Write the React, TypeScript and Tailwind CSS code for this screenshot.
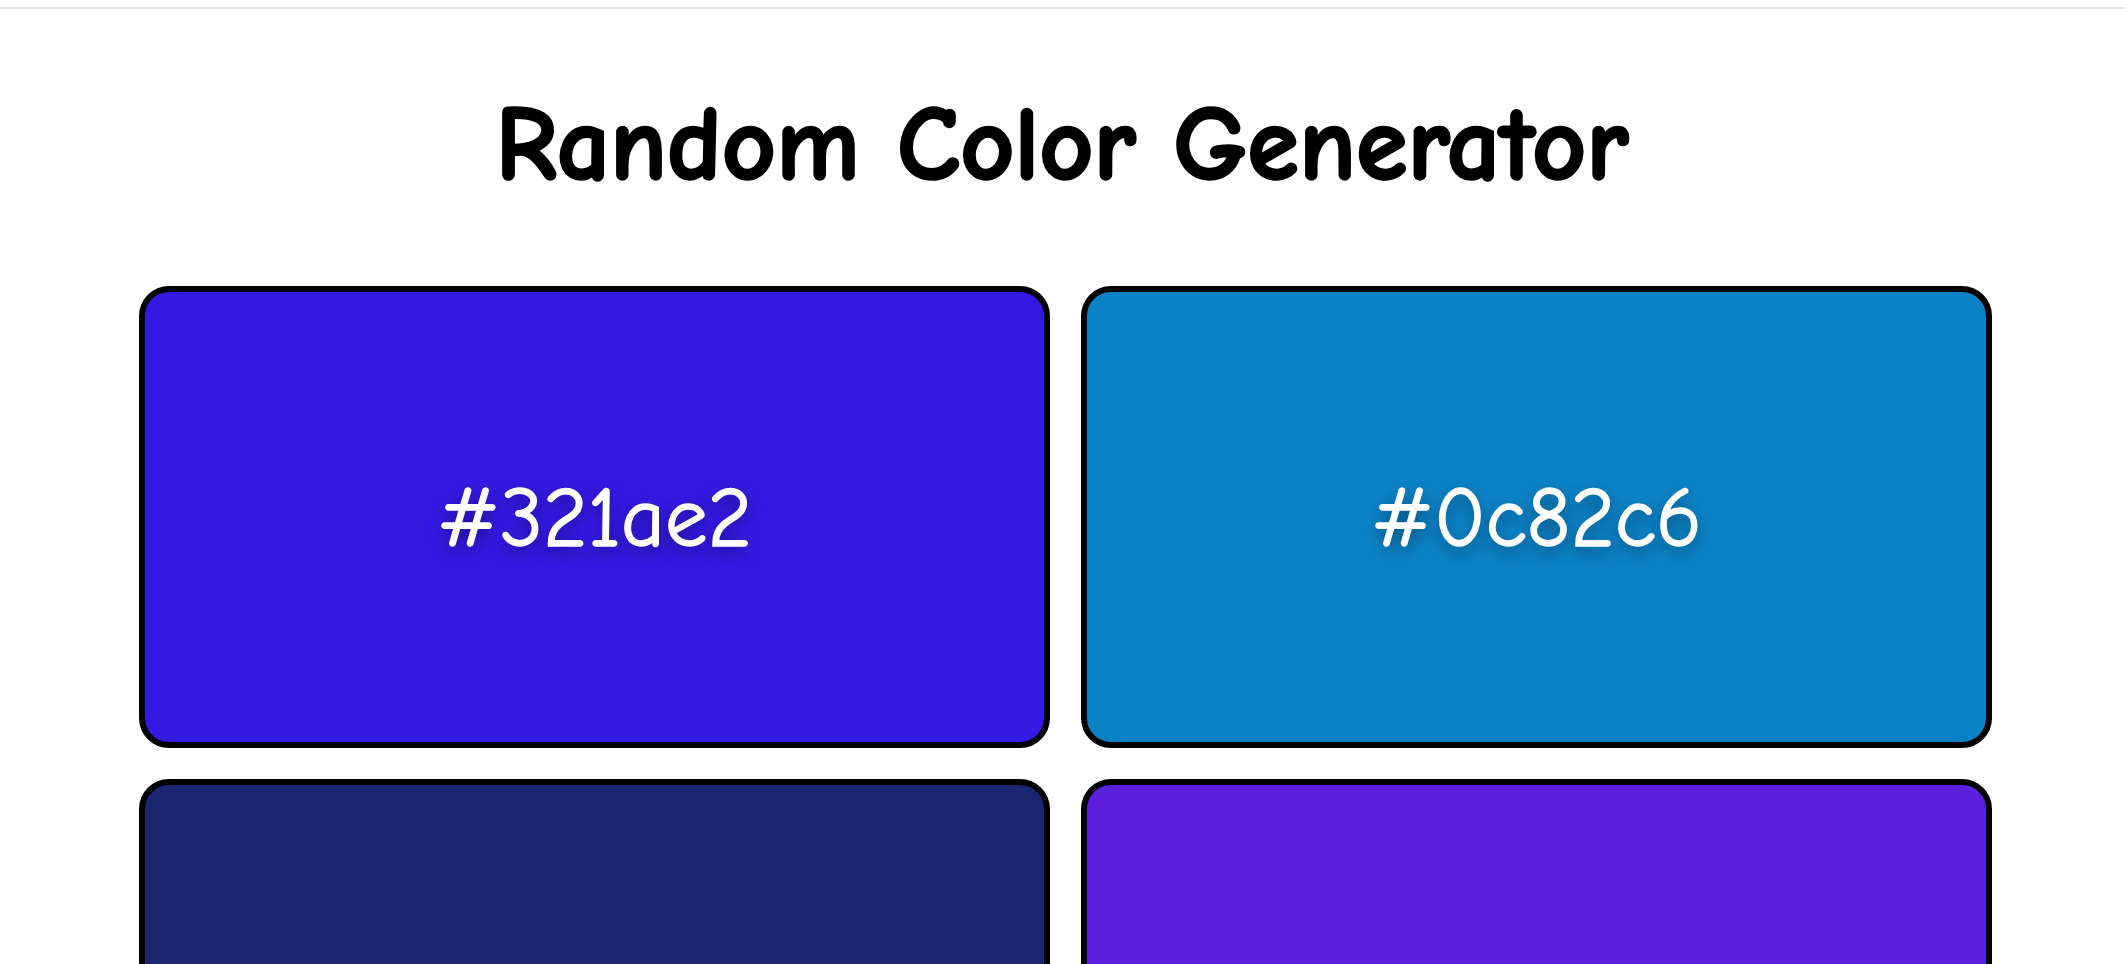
const colors = ["#321ae2", "#0c82c6", "#1c2572", "#5c1fdd"];

function ColorCard({ hex }: { hex: string }) {
  return (
    <div
      className="flex h-[462px] items-center justify-center rounded-[30px] border-[6px] border-black"
      style={{ backgroundColor: hex }}
    >
      <span className="mt-[3px] text-[85px] leading-none text-white [-webkit-text-stroke:1.5px_white] [text-shadow:0_6px_16px_rgba(0,0,0,0.45)]">
        {hex}
      </span>
    </div>
  );
}

export default function App() {
  return (
    <div className="min-h-screen bg-white font-['Comic_Sans_MS','Comic_Neue',cursive]">
      <div className="h-[7px]" />
      <div className="border-t-2 border-[#e4e4e4]" />

      <h1 className="mt-[76px] text-center text-[105px] font-bold leading-[120px] text-black [-webkit-text-stroke:2.5px_black]">
        Random Color Generator
      </h1>

      <div className="mt-[81px] grid grid-cols-2 gap-[31px] pl-[139px] pr-[132px]">
        {colors.map((c) => (
          <ColorCard key={c} hex={c} />
        ))}
      </div>
    </div>
  );
}
